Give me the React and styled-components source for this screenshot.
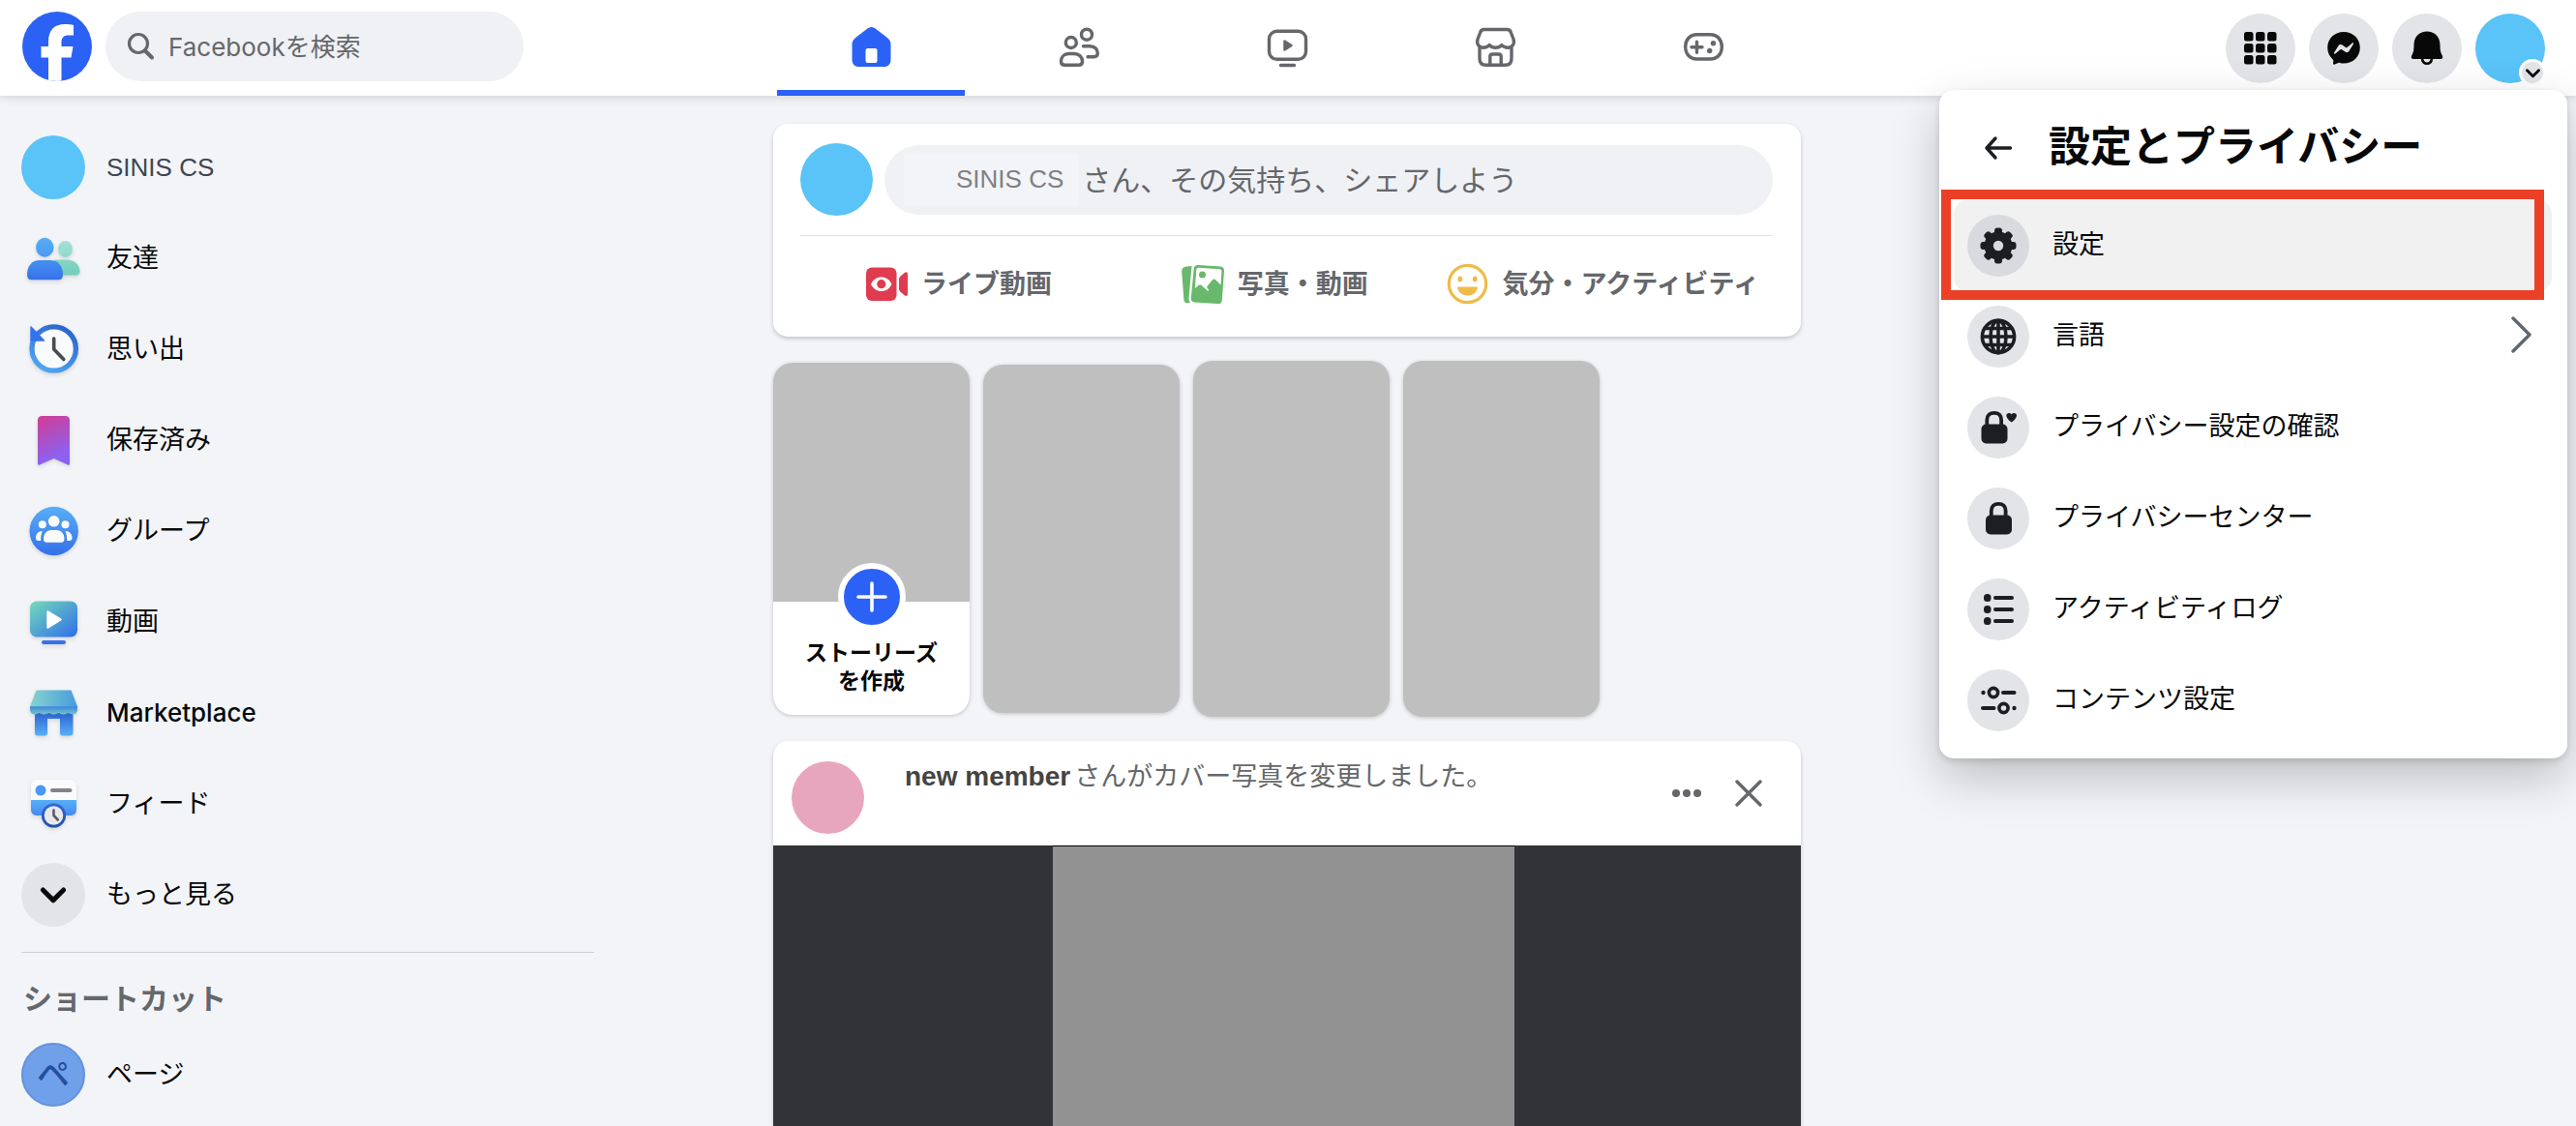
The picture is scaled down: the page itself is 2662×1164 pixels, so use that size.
import React, { useState } from 'react';
import styled, { createGlobalStyle } from 'styled-components';

const GlobalStyle = createGlobalStyle`
  * {
    box-sizing: border-box;
  }
  body {
    margin: 0;
    background: #f2f4f8;
    color: #080809;
    font-family: Inter, 'Noto Sans CJK JP', sans-serif;
    font-size: 27px;
    line-height: 36px;
  }
  button,
  input {
    font: inherit;
    color: inherit;
    border: none;
    padding: 0;
    background: none;
  }
  button {
    cursor: pointer;
  }
  a {
    color: inherit;
    text-decoration: none;
  }
  svg {
    display: block;
    flex: none;
  }
`;

const Page = styled.div`
  display: flex;
  flex-direction: column;
  height: 100vh;
  overflow: hidden;
`;

const TopBar = styled.header`
  position: relative;
  z-index: 1;
  display: grid;
  grid-template-columns: 1fr auto 1fr;
  height: 99px;
  flex: none;
  padding-right: 2px;
  background: #fff;
  box-shadow: 0 1px 10px rgba(0, 0, 0, 0.16);
`;

const TopLeft = styled.div`
  display: flex;
  align-items: center;
  gap: 14px;
  padding: 0 23px 3px;
`;

const SearchBox = styled.label`
  display: flex;
  align-items: center;
  gap: 14px;
  width: 432px;
  height: 72px;
  padding: 0 22px;
  border-radius: 36px;
  background: #f0f1f5;
  color: #65676b;
`;

const SearchInput = styled.input`
  flex: 1;
  min-width: 0;
  height: 48px;
  font-size: 26px;
  outline: none;
  &::placeholder {
    color: #65676b;
    opacity: 1;
  }
`;

const Tabs = styled.nav`
  display: flex;
  gap: 21px;
`;

const Tab = styled.a`
  display: flex;
  justify-content: center;
  align-items: center;
  width: 194px;
  border: solid transparent;
  border-width: 6px 0;
  border-bottom-color: ${(props) => (props.$active ? '#2b62f5' : 'transparent')};
  color: ${(props) => (props.$active ? '#2b62f5' : '#65676b')};
`;

const TopRight = styled.div`
  display: flex;
  justify-content: flex-end;
  align-items: center;
  gap: 14px;
  padding: 1px 30px 0;
`;

const RoundButton = styled.button`
  position: relative;
  width: 72px;
  height: 72px;
  border-radius: 50%;
  background: ${(props) => props.$color || '#e3e4e8'};
`;

const Badge = styled.span`
  position: absolute;
  right: -1px;
  bottom: -3px;
  display: flex;
  justify-content: center;
  align-items: center;
  width: 28px;
  height: 28px;
  border: 3px solid #fff;
  border-radius: 50%;
  background: #e3e4e8;
`;

const Content = styled.div`
  display: grid;
  grid-template-columns: 1fr minmax(0, 1062px) 1fr;
  flex: 1;
  min-height: 0;
  padding-right: 2px;
`;

const Sidebar = styled.aside`
  width: 636px;
  padding: 27px 22px 0;
`;

const List = styled.ul`
  margin: 0;
  padding: 0;
  list-style: none;
`;

const SideLink = styled.a`
  display: flex;
  align-items: center;
  gap: 22px;
  height: 94px;
  font-size: ${(props) => (props.$latin ? 26 : 27)}px;
  font-weight: ${(props) => (props.$latin ? 500 : 400)};
`;

const Avatar = styled.span`
  display: flex;
  justify-content: center;
  align-items: center;
  flex: none;
  width: ${(props) => props.$size}px;
  height: ${(props) => props.$size}px;
  border-radius: 50%;
  background: ${(props) => props.$color || '#5ac3f7'};
`;

const PageAvatar = styled(Avatar)`
  border: 2px solid #6492dc;
  color: #234f9f;
  font-size: 34px;
  font-weight: 500;
`;

const UserName = styled.span`
  font-family: 'Liberation Sans', sans-serif;
  font-size: 26px;
  color: #3e4650;
`;

const Divider = styled.hr`
  height: 1px;
  margin: ${(props) => props.$margin || '0'};
  border: none;
  background: ${(props) => props.$color || '#cdd0d5'};
`;

const SideHeading = styled.h2`
  margin: 15px 0 0;
  padding-left: 2px;
  font-size: 30px;
  line-height: 64px;
  font-weight: 600;
  color: #65676b;
`;

const Feed = styled.main`
  display: flex;
  flex-direction: column;
  gap: 25px;
  min-height: 0;
  padding-top: 29px;
`;

const Card = styled.section`
  border-radius: 15px;
  background: #fff;
  box-shadow: 0 2px 4px rgba(0, 0, 0, 0.2);
`;

const Composer = styled(Card)`
  padding: 20px 29px 18px 28px;
`;

const ComposerTop = styled.div`
  display: flex;
  align-items: center;
  gap: 12px;
`;

const ComposerButton = styled.button`
  display: flex;
  align-items: center;
  gap: 3px;
  flex: 1;
  height: 72px;
  padding-left: 20px;
  border-radius: 36px;
  background: #f0f1f5;
  font-size: 30px;
  color: #65676b;
`;

const NameChip = styled(UserName)`
  padding: 0 16px 0 54px;
  line-height: 53px;
  background: #f2f4f8;
  color: #808080;
`;

const ComposerActions = styled.div`
  display: flex;
  margin-top: 14px;
`;

const ComposerAction = styled.button`
  display: flex;
  justify-content: center;
  align-items: center;
  gap: 14px;
  flex: 1 1 0;
  height: 72px;
  padding: 0 14px;
  font-weight: 600;
  white-space: nowrap;
  color: #65676b;
`;

const Stories = styled.div`
  display: flex;
  align-items: center;
  gap: 14px;
`;

const Story = styled.article`
  display: flex;
  flex-direction: column;
  width: 203px;
  height: ${(props) => props.$height}px;
  border-radius: 20px;
  overflow: hidden;
  background: #bfbfbf;
  box-shadow: 0 1px 4px rgba(0, 0, 0, 0.2);
`;

const StoryFooter = styled.div`
  position: relative;
  height: 117px;
  margin-top: auto;
  padding-top: 39px;
  background: #fff;
  font-size: 23px;
  line-height: 29px;
  font-weight: 600;
  text-align: center;
`;

const AddStory = styled.button`
  position: absolute;
  top: -40px;
  left: 50%;
  display: flex;
  justify-content: center;
  align-items: center;
  width: 70px;
  height: 70px;
  margin-left: -35px;
  border: 6px solid #fff;
  border-radius: 50%;
  background: #2b62f5;
`;

const Post = styled(Card)`
  display: flex;
  flex-direction: column;
  flex: 1;
  min-height: 0;
  border-radius: 15px 15px 0 0;
`;

const PostHeader = styled.div`
  display: flex;
  height: 108px;
  padding: 21px 22px 0 19px;
`;

const PostText = styled.p`
  flex: 1;
  margin: 0 0 0 42px;
  line-height: 32px;
  color: #65676b;
  strong {
    margin-right: 4px;
    font-family: 'Liberation Sans', sans-serif;
    font-size: 28px;
    color: #444;
  }
`;

const PostButton = styled.button`
  display: flex;
  justify-content: center;
  align-items: center;
  width: 64px;
  height: 66px;
`;

const PostMedia = styled.div`
  display: grid;
  grid-template-columns: 289fr 477fr 296fr;
  flex: 1;
  background: #323337;
`;

const Photo = styled.div`
  grid-column: 2;
  border-top: 1px solid #000;
  background: #929292;
`;

const Menu = styled.div`
  position: absolute;
  top: 93px;
  right: 9px;
  z-index: 2;
  width: 649px;
  padding: 0 16px 13px 15px;
  border-radius: 15px;
  background: #fff;
  box-shadow: 0 20px 50px rgba(0, 0, 0, 0.22), 0 3px 7px rgba(0, 0, 0, 0.12);
`;

const MenuHeader = styled.div`
  display: flex;
  align-items: center;
  gap: 20px;
  height: 114px;
  padding: 6px 14px 0;
  h1 {
    margin: 0;
    padding-bottom: 4px;
    font-size: 43px;
    line-height: 60px;
    font-weight: 700;
  }
`;

const MenuItem = styled.button`
  position: relative;
  display: flex;
  align-items: center;
  gap: 24px;
  width: 100%;
  height: 94px;
  padding: 0 20px 0 14px;
  border-radius: 14px;
  background: ${(props) => (props.$active ? '#f1f1f1' : 'transparent')};
  text-align: left;
`;

const MenuLabel = styled.span`
  flex: 1;
  padding-bottom: 2px;
`;

const Highlight = styled.span`
  position: absolute;
  top: -11px;
  right: 8px;
  bottom: -9px;
  left: -13px;
  border: 10px solid #eb4026;
  pointer-events: none;
`;

const Logo = () => (
  <svg width="72" height="72" viewBox="0 0 72 72">
    <defs>
      <clipPath id="logoClip">
        <circle cx="36" cy="36" r="36" />
      </clipPath>
    </defs>
    <g clipPath="url(#logoClip)">
      <rect width="72" height="72" fill="#2b62f5" />
      <path
        d="M27 72V47.5H19.500V36H27V31.500C27 19 33 13 44 13C47.500 13 51 13.400 53 14V24.500H48C42.500 24.500 40.500 27 40.500 32V36H52.500L50.500 47.500H40.500V72Z"
        fill="#fff"
      />
    </g>
  </svg>
);

const SearchIcon = () => (
  <svg width="29" height="30" viewBox="0 0 29 30" fill="none" stroke="#65676b" strokeLinecap="round">
    <circle cx="12" cy="12" r="9.5" strokeWidth="3.2" />
    <path d="M19 19.5L26 26.5" strokeWidth="4" />
  </svg>
);

const TabSvg = ({ children }) => (
  <svg
    width="49"
    height="49"
    viewBox="0 0 49 49"
    fill="none"
    stroke="currentColor"
    strokeWidth="3.4"
    strokeLinecap="round"
    strokeLinejoin="round">
    {children}
  </svg>
);

const HomeIcon = () => (
  <TabSvg>
    <path
      d="M24.5 3C26.5 3 28 4 29.5 5.200L40 13.200C43.500 16 44.500 18 44.500 21V36C44.500 41.500 42 44 37 44H12C7 44 4.500 41.500 4.500 36V21C4.500 18 5.500 16 9 13.200L19.500 5.200C21 4 22.500 3 24.500 3Z"
      fill="currentColor"
      stroke="none"
    />
    <rect x="18.5" y="25" width="12" height="15" rx="2" fill="#fff" stroke="none" />
  </TabSvg>
);

const PeopleIcon = () => (
  <TabSvg>
    <circle cx="15.8" cy="19" r="5.5" />
    <circle cx="32" cy="10.7" r="5.5" />
    <path d="M13.5 30.5H19C24 30.5 27.5 34 27.5 38.5C27.5 41 26 42.3 23.5 42.3H9.5C7 42.3 5.500 41 5.500 38.500C5.500 34 8.500 30.500 13.500 30.500Z" />
    <path d="M28.5 22.7H35.5C40 22.7 43.3 26 43.3 30C43.3 32.3 41.8 33.7 39.5 33.7H33" />
  </TabSvg>
);

const VideoIcon = () => (
  <TabSvg>
    <rect x="5.5" y="7.3" width="38" height="29" rx="8" />
    <path d="M17.5 42.5H31.5" />
    <path d="M21.5 17.5V26.5L28.5 22Z" fill="currentColor" strokeWidth="2.5" />
  </TabSvg>
);

const StoreIcon = () => (
  <TabSvg>
    <path d="M12.5 5.5H36.5C38.5 5.5 39.7 6.5 40.3 8.5L43 15.5C44.5 20.5 41.5 24.3 37.5 24.3C34.5 24.3 32 23 30.8 21.5C29.5 23.3 27.3 24.3 24.5 24.3C21.7 24.3 19.5 23.3 18.2 21.5C17 23 14.5 24.3 11.5 24.3C7.5 24.3 4.5 20.5 6 15.5L8.7 8.5C9.3 6.5 10.5 5.5 12.5 5.5Z" />
    <path d="M8 25V35.5C8 40 10.5 42.3 14.5 42.3H34.5C38.5 42.3 41 40 41 35.5V25" />
    <path d="M18.8 42V33.5C18.8 32 20 31 21.5 31H27.5C29 31 30.2 32 30.2 33.5V42" />
  </TabSvg>
);

const GameIcon = () => (
  <TabSvg>
    <path d="M17.5 10.7H31.5C38.5 10.7 43.3 16 43.3 23.3C43.3 31 38.5 36 31.5 36H17.5C10.5 36 5.7 31 5.7 23.3C5.7 16 10.5 10.7 17.5 10.7Z" />
    <path d="M17.5 18.2V29.2M12 23.7H23" />
    <circle cx="34.5" cy="19.7" r="2.7" fill="currentColor" stroke="none" />
    <circle cx="30.7" cy="27.5" r="2.7" fill="currentColor" stroke="none" />
  </TabSvg>
);

const GridIcon = () => (
  <svg width="72" height="72" viewBox="0 0 72 72" fill="#080809">
    {[19, 31, 43].map((y) =>
      [19, 31, 43].map((x) => (
        <rect key={`${x}-${y}`} x={x} y={y} width="9.5" height="9.5" rx="2.5" />
      ))
    )}
  </svg>
);

const MessengerIcon = () => (
  <svg width="72" height="72" viewBox="0 0 72 72">
    <path
      d="M36 19C26.5 19 19.2 25.8 19.2 35.3C19.2 40.2 21.2 44.2 24.5 47.2C25 47.7 25.3 48.3 25.3 49L25 51.5C25 52.5 25.8 53 26.7 52.6L30.5 51C31 50.8 31.5 50.8 32 51C33.3 51.4 34.6 51.6 36 51.6C45.5 51.6 52.8 44.8 52.8 35.3C52.8 25.8 45.5 19 36 19Z"
      fill="#080809"
    />
    <path
      d="M26 40.5L30.5 33.3C31.5 31.8 33.2 31.5 34.6 32.5L38 35C38.5 35.3 39 35.3 39.5 35L44.8 30.5C45.6 30 46.5 30.8 46 31.6L41.5 38.8C40.5 40.3 38.8 40.6 37.4 39.6L34 37.2C33.5 36.9 33 36.9 32.5 37.2L27.2 41.5C26.4 42.1 25.5 41.3 26 40.5Z"
      fill="#e3e4e8"
    />
  </svg>
);

const BellIcon = () => (
  <svg width="72" height="72" viewBox="0 0 72 72">
    <path
      d="M36 18.5C28.5 18.5 23 23.5 22.6 31L22.3 37C22.2 38.5 21.8 40 21.2 41.3L20 44C19.3 45.7 20.2 47 22 47H50C51.8 47 52.7 45.7 52 44L50.8 41.3C50.2 40 49.8 38.5 49.7 37L49.4 31C49 23.5 43.5 18.5 36 18.5Z"
      fill="#080809"
    />
    <path d="M31 47C31.5 50 33.3 51.7 36 51.7C38.7 51.7 40.5 50 41 47" fill="none" stroke="#080809" strokeWidth="2.6" />
  </svg>
);

const Chevron = ({ size, width }) => (
  <svg width={size} height={size} viewBox="0 0 24 24" fill="none" stroke="#080809" strokeWidth={width} strokeLinecap="round" strokeLinejoin="round">
    <path d="M3.5 8L12 16.5L20.5 8" />
  </svg>
);

const SideSvg = styled.svg`
  width: 66px;
  height: 66px;
  filter: drop-shadow(0 2px 2px rgba(0, 0, 0, 0.12));
`;

const Gradient = ({ id, from, to, diagonal }) => (
  <linearGradient id={id} x1="0" y1="0" x2={diagonal ? '1' : '0'} y2="1">
    <stop offset="0" stopColor={from} />
    <stop offset="1" stopColor={to} />
  </linearGradient>
);

const FriendsColor = () => (
  <SideSvg viewBox="0 0 66 66">
    <defs>
      <Gradient id="frA" from="#58aef8" to="#4b98f2" />
      <Gradient id="frB" from="#4690f2" to="#3671e9" />
      <Gradient id="frC" from="#a3e0d8" to="#8fd9cc" />
      <Gradient id="frD" from="#87d5c6" to="#72cdb9" />
    </defs>
    <ellipse cx="45.5" cy="23.5" rx="7.5" ry="8.5" fill="url(#frC)" />
    <path d="M34 34.5H47C55 34.5 60.5 40 60.5 46.5C60.5 49 59 50.5 56.5 50.5H34Z" fill="url(#frD)" />
    <ellipse cx="24.3" cy="21.7" rx="9.2" ry="10" fill="url(#frA)" />
    <path d="M19 35H30C38 35 43 41 43 50C43 53.5 41.5 55.2 38.5 55.2H10.5C7.5 55.2 6 53.5 6 50C6 41 11 35 19 35Z" fill="url(#frB)" />
  </SideSvg>
);

const MemoriesColor = () => (
  <SideSvg viewBox="0 0 66 66">
    <defs>
      <linearGradient id="meA" x1="0.7" y1="0" x2="0.2" y2="1">
        <stop offset="0" stopColor="#2c66cf" />
        <stop offset="1" stopColor="#51a7f3" />
      </linearGradient>
    </defs>
    <circle cx="33.7" cy="32.5" r="22.7" fill="#f9fafb" stroke="url(#meA)" strokeWidth="5.3" />
    <path d="M10 10V24H23.5Z" fill="#3474ea" stroke="#3474ea" strokeWidth="1.5" strokeLinejoin="round" />
    <path d="M33.7 22V33L43.8 43.5" fill="none" stroke="#4a4b4f" strokeWidth="3.6" strokeLinecap="round" strokeLinejoin="round" />
  </SideSvg>
);

const SavedColor = () => (
  <SideSvg viewBox="0 0 66 66">
    <defs>
      <linearGradient id="saA" x1="0.3" y1="0" x2="0.55" y2="0.85">
        <stop offset="0" stopColor="#cd3f9b" />
        <stop offset="1" stopColor="#8b62f0" />
      </linearGradient>
    </defs>
    <path d="M21.5 8H45.5C48.5 8 50 9.5 50 12.5V57C50 58.8 49 59.3 47.5 58.3L33.7 52L19.5 58.3C18 59.3 17 58.8 17 57V12.5C17 9.5 18.5 8 21.5 8Z" fill="url(#saA)" />
  </SideSvg>
);

const GroupsColor = () => (
  <SideSvg viewBox="0 0 66 66">
    <defs>
      <Gradient id="grA" from="#58aef8" to="#3470e9" />
    </defs>
    <circle cx="33.7" cy="33" r="25.2" fill="url(#grA)" />
    <g fill="#f9fafc">
      <circle cx="33.7" cy="22.8" r="5.8" />
      <circle cx="21.8" cy="26.2" r="4" />
      <circle cx="45.5" cy="26.2" r="4" />
      <path d="M31 32H36.5C41.5 32 44.5 36 44.5 41C44.5 43.5 43.3 44.7 41 44.7H26.5C24 44.7 23 43.5 23 41C23 36 26 32 31 32Z" />
      <path d="M21.8 33C17.5 33 15 36 15 40C15 42 16 43 18 43H20.2C20 39 20.5 36 21.8 33Z" />
      <path d="M45.5 33C50 33 52.5 36 52.5 40C52.5 42 51.5 43 49.5 43H47.2C47.3 39 46.8 36 45.5 33Z" />
    </g>
  </SideSvg>
);

const VideoColor = () => (
  <SideSvg viewBox="0 0 66 66">
    <defs>
      <Gradient id="viA" from="#74dcb8" to="#2f6cec" diagonal />
    </defs>
    <rect x="9" y="11.5" width="49" height="37" rx="7" fill="url(#viA)" />
    <rect x="21" y="52" width="25" height="4" rx="2" fill="#3671e9" />
    <path d="M27.5 22.5V38.5L40.5 30.5Z" fill="#fff" stroke="#fff" strokeWidth="2.5" strokeLinejoin="round" />
  </SideSvg>
);

const MarketColor = () => (
  <SideSvg viewBox="0 0 66 66">
    <defs>
      <linearGradient id="maA">
        <stop offset="0" stopColor="#86d4cc" />
        <stop offset="1" stopColor="#479bdf" />
      </linearGradient>
      <Gradient id="maB" from="#3c82e0" to="#72c9c6" />
      <Gradient id="maC" from="#2f62cf" to="#57b0f8" />
    </defs>
    <path d="M14 33H53.5V53.5C53.5 55.5 52.5 56.5 50.5 56.5H42.5C41 56.5 40 55.5 40 54V39H27V54C27 55.5 26 56.5 24.5 56.5H17C15 56.5 14 55.5 14 53.5Z" fill="url(#maC)" />
    <path d="M9 26H58V29.5C58 32.5 56.5 34.5 53.5 34.5C51 34.5 49.5 33.8 48.5 32.5C45.5 35.2 41.5 35.2 38.5 32.5C35.5 35.2 31.5 35.2 28.5 32.5C25.5 35.2 21.5 35.2 18.5 32.5C17.5 33.8 16 34.5 13.5 34.5C10.5 34.5 9 32.5 9 29.5Z" fill="url(#maB)" />
    <path d="M15.5 9.5H51.5L58 26.2H9Z" fill="url(#maA)" />
  </SideSvg>
);

const FeedColor = () => (
  <SideSvg viewBox="0 0 66 66">
    <defs>
      <Gradient id="feA" from="#58b0f8" to="#4489f0" />
      <Gradient id="feB" from="#3168d2" to="#2450a8" />
    </defs>
    <path d="M17 8H50C54.5 8 57 10.5 57 15V29H10V15C10 10.5 12.5 8 17 8Z" fill="#fbfbfc" />
    <path d="M10 29H57V38.5C57 43 54.5 45 50 45H17C12.5 45 10 43 10 38.5Z" fill="url(#feA)" />
    <circle cx="20" cy="19" r="5.5" fill="#4a98f5" />
    <path d="M32 19H50.5" stroke="#838489" strokeWidth="4" strokeLinecap="round" />
    <circle cx="33.5" cy="45" r="11.2" fill="#e7e8ec" stroke="url(#feB)" strokeWidth="2.8" />
    <path d="M33.5 39.5V45L37.8 49.5" fill="none" stroke="#5b5c60" strokeWidth="2.6" strokeLinecap="round" />
  </SideSvg>
);

const LiveIcon = () => (
  <svg width="44" height="44" viewBox="0 0 44 44" fill="#df3d4f">
    <rect x="1" y="4.5" width="31.5" height="34.5" rx="6" />
    <path d="M35 17C35 15.5 35.5 14.5 36.5 13.5L41 9.8C42.5 8.8 44 9.3 44 11.3V32C44 34 42.5 34.5 41 33.5L36.5 29.7C35.5 28.7 35 27.7 35 26.2Z" />
    <path d="M6 21.7C8.5 17 12 14.5 16.8 14.5C21.5 14.5 25 17 27.5 21.7C25 26.5 21.5 29 16.8 29C12 29 8.5 26.5 6 21.7Z" fill="#fff" />
    <circle cx="16.8" cy="21.7" r="4.6" />
  </svg>
);

const PhotoIcon = () => (
  <svg width="44" height="44" viewBox="0 0 44 44" fill="#68b96c">
    <path d="M5 3.5L10.5 3L7.5 36.5C7.3 38.3 8 40 9.3 41L6.5 41.3C4 41.5 2.7 40.3 2.4 38L0.2 8.5C0 5.5 2 3.8 5 3.5Z" />
    <path d="M17.5 2L40 3.6C42.7 3.8 44.2 5.5 44 8.2L41.8 38.2C41.6 41 40 42.3 37.2 42.1L13.5 40.4C10.8 40.2 9.6 38.6 9.8 36L12.7 6C13 3.3 14.7 1.8 17.5 2Z" />
    <path d="M17.8 4.7L39.3 6.2C40.9 6.3 41.5 7.2 41.4 8.7L40.5 22.5L35.5 17.5C34.3 16.3 33 16.3 31.8 17.5L26 24.5L28 27.5C28.4 28.3 27.4 29 26.7 28.4L20.5 22.8C19.5 22 18.7 22 17.8 22.7L13.8 26L15.3 7C15.4 5.4 16.2 4.6 17.8 4.7Z" fill="#fff" />
    <circle cx="21.5" cy="12" r="3.5" />
  </svg>
);

const FeelingIcon = () => (
  <svg width="44" height="44" viewBox="0 0 44 44" fill="#efbb48">
    <circle cx="21.5" cy="21.5" r="19.2" fill="none" stroke="#efbb48" strokeWidth="3.2" />
    <ellipse cx="13.8" cy="16.5" rx="2.4" ry="3" />
    <ellipse cx="29.2" cy="16.5" rx="2.4" ry="3" />
    <path d="M12.5 24.5H30.5C31.5 24.5 32 25 31.8 26C30.8 30.5 26.5 33.5 21.5 33.5C16.5 33.5 12.2 30.5 11.2 26C11 25 11.5 24.5 12.5 24.5Z" />
  </svg>
);

const MenuSvg = ({ children }) => (
  <svg width="64" height="64" viewBox="0 0 64 64" fill="#1c1e21">
    {children}
  </svg>
);

const GearIcon = () => (
  <MenuSvg>
    {[0, 45, 90, 135].map((angle) => (
      <rect key={angle} x="28" y="13.5" width="8" height="37" rx="3" transform={`rotate(${angle} 32 32)`} />
    ))}
    <circle cx="32" cy="32" r="14.5" />
    <circle cx="32" cy="32" r="5.2" fill="#d8dadf" />
  </MenuSvg>
);

const GlobeIcon = () => (
  <MenuSvg>
    <g fill="none" stroke="#1c1e21" strokeWidth="3.6">
      <circle cx="32" cy="32" r="16.6" />
      <ellipse cx="32" cy="32" rx="8" ry="16.6" />
      <path d="M32 15V49M15 32H49M17.5 23.5H46.5M17.5 40.5H46.5" />
    </g>
  </MenuSvg>
);

const LockShape = () => (
  <>
    <rect x="19" y="28.5" width="27" height="20" rx="5" />
    <path d="M24.8 30V24C24.8 19.5 27.8 16.8 32.3 16.8C36.8 16.8 39.6 19.5 39.6 24V30" fill="none" stroke="#1c1e21" strokeWidth="3.8" />
  </>
);

const LockIcon = () => (
  <MenuSvg>
    <LockShape />
  </MenuSvg>
);

const LockHeartIcon = () => (
  <MenuSvg>
    <g transform="translate(-4.5 0)">
      <LockShape />
    </g>
    <path d="M45.7 26.5C42 24 40.3 21.5 40.3 19.5C40.3 16.8 44 16 45.7 18.5C47.4 16 51 16.8 51 19.5C51 21.5 49.4 24 45.7 26.5Z" />
  </MenuSvg>
);

const ListIcon = () => (
  <MenuSvg>
    {[20, 32, 44].map((y) => (
      <g key={y}>
        <rect x="17" y={y - 4} width="7.5" height="8" rx="3.5" />
        <rect x="27" y={y - 2} width="21" height="4" rx="2" />
      </g>
    ))}
  </MenuSvg>
);

const SlidersIcon = () => (
  <MenuSvg>
    <circle cx="16.5" cy="24" r="2.2" />
    <rect x="35" y="22" width="15.5" height="4" rx="2" />
    <rect x="14" y="38" width="15.5" height="4" rx="2" />
    <circle cx="48.5" cy="40" r="2.2" />
    <g fill="none" stroke="#1c1e21" strokeWidth="3.6">
      <circle cx="27" cy="24" r="4.6" />
      <circle cx="37.5" cy="40" r="4.6" />
    </g>
  </MenuSvg>
);

const tabs = [
  { name: 'ホーム', icon: HomeIcon },
  { name: '友達', icon: PeopleIcon },
  { name: '動画', icon: VideoIcon },
  { name: 'Marketplace', icon: StoreIcon },
  { name: 'ゲーム', icon: GameIcon },
];

const sideLinks = [
  { name: '友達', icon: FriendsColor },
  { name: '思い出', icon: MemoriesColor },
  { name: '保存済み', icon: SavedColor },
  { name: 'グループ', icon: GroupsColor },
  { name: '動画', icon: VideoColor },
  { name: 'Marketplace', icon: MarketColor, latin: true },
  { name: 'フィード', icon: FeedColor },
];

const composerActions = [
  { name: 'ライブ動画', icon: LiveIcon },
  { name: '写真・動画', icon: PhotoIcon },
  { name: '気分・アクティビティ', icon: FeelingIcon },
];

const menuItems = [
  { name: '設定', icon: GearIcon },
  { name: '言語', icon: GlobeIcon, more: true },
  { name: 'プライバシー設定の確認', icon: LockHeartIcon },
  { name: 'プライバシーセンター', icon: LockIcon },
  { name: 'アクティビティログ', icon: ListIcon },
  { name: 'コンテンツ設定', icon: SlidersIcon },
];

const SettingsMenu = () => {
  const [active, setActive] = useState('設定');
  return (
    <Menu>
      <MenuHeader>
        <button type="button" aria-label="戻る">
          <svg width="64" height="64" viewBox="0 0 64 64" fill="none" stroke="#1c1e21" strokeWidth="3.4" strokeLinecap="round" strokeLinejoin="round">
            <path d="M44.5 32H20M29 22L20 32L29 42" />
          </svg>
        </button>
        <h1>設定とプライバシー</h1>
      </MenuHeader>
      {menuItems.map(({ name, icon: Icon, more }) => (
        <MenuItem key={name} type="button" $active={active === name} onClick={() => setActive(name)}>
          <Avatar $size={64} $color={active === name ? '#d8dadf' : '#e3e4e8'}>
            <Icon />
          </Avatar>
          <MenuLabel>{name}</MenuLabel>
          {more && (
            <svg width="22" height="42" viewBox="0 0 22 42" fill="none" stroke="#606770" strokeWidth="3.4" strokeLinecap="round" strokeLinejoin="round">
              <path d="M2 2L19 19L2 36" />
            </svg>
          )}
          {active === name && <Highlight />}
        </MenuItem>
      ))}
    </Menu>
  );
};

const App = () => {
  const [activeTab, setActiveTab] = useState('ホーム');
  const [query, setQuery] = useState('');

  return (
    <Page>
      <GlobalStyle />
      <TopBar>
        <TopLeft>
          <a href="#home" aria-label="Facebook">
            <Logo />
          </a>
          <SearchBox>
            <SearchIcon />
            <SearchInput
              type="text"
              aria-label="Facebookを検索"
              placeholder="Facebookを検索"
              value={query}
              onChange={(e) => setQuery(e.target.value)}
            />
          </SearchBox>
        </TopLeft>
        <Tabs>
          {tabs.map(({ name, icon: Icon }) => (
            <Tab key={name} href="#tab" aria-label={name} $active={activeTab === name} onClick={() => setActiveTab(name)}>
              <Icon />
            </Tab>
          ))}
        </Tabs>
        <TopRight>
          <RoundButton type="button" aria-label="メニュー">
            <GridIcon />
          </RoundButton>
          <RoundButton type="button" aria-label="Messenger">
            <MessengerIcon />
          </RoundButton>
          <RoundButton type="button" aria-label="お知らせ">
            <BellIcon />
          </RoundButton>
          <RoundButton type="button" aria-label="アカウント" $color="#5ac3f7">
            <Badge>
              <Chevron size={17} width={4} />
            </Badge>
          </RoundButton>
        </TopRight>
      </TopBar>

      <Content>
        <Sidebar>
          <List>
            <li>
              <SideLink href="#profile">
                <Avatar $size={66} />
                <UserName>SINIS CS</UserName>
              </SideLink>
            </li>
            {sideLinks.map(({ name, icon: Icon, latin }) => (
              <li key={name}>
                <SideLink href="#link" $latin={latin}>
                  <Icon />
                  {name}
                </SideLink>
              </li>
            ))}
            <li>
              <SideLink href="#more">
                <Avatar $size={66} $color="#e3e4e8">
                  <Chevron size={30} width={4} />
                </Avatar>
                もっと見る
              </SideLink>
            </li>
          </List>
          <Divider $margin="12px 0 0" />
          <SideHeading>ショートカット</SideHeading>
          <SideLink href="#page">
            <PageAvatar $size={66} $color="#71a0ea">
              ペ
            </PageAvatar>
            ページ
          </SideLink>
        </Sidebar>

        <Feed>
          <Composer>
            <ComposerTop>
              <Avatar $size={75} />
              <ComposerButton type="button">
                <NameChip>SINIS CS</NameChip>
                さん、その気持ち、シェアしよう
              </ComposerButton>
            </ComposerTop>
            <Divider $margin="20px 0 0" $color="#e0e2e6" />
            <ComposerActions>
              {composerActions.map(({ name, icon: Icon }) => (
                <ComposerAction key={name} type="button">
                  <Icon />
                  {name}
                </ComposerAction>
              ))}
            </ComposerActions>
          </Composer>

          <Stories>
            <Story $height={364}>
              <StoryFooter>
                <AddStory type="button" aria-label="ストーリーズを作成">
                  <svg width="32" height="32" viewBox="0 0 32 32" stroke="#fff" strokeWidth="3.6" strokeLinecap="round">
                    <path d="M16 2V30M2 16H30" />
                  </svg>
                </AddStory>
                ストーリーズ
                <br />
                を作成
              </StoryFooter>
            </Story>
            <Story $height={360} />
            <Story $height={368} />
            <Story $height={368} />
          </Stories>

          <Post>
            <PostHeader>
              <Avatar $size={75} $color="#e8a6be" />
              <PostText>
                <strong>new member</strong>
                さんがカバー写真を変更しました。
              </PostText>
              <PostButton type="button" aria-label="その他">
                <svg width="32" height="10" viewBox="0 0 32 10" fill="#65676b">
                  <circle cx="5" cy="5" r="4" />
                  <circle cx="16" cy="5" r="4" />
                  <circle cx="27" cy="5" r="4" />
                </svg>
              </PostButton>
              <PostButton type="button" aria-label="閉じる">
                <svg width="28" height="28" viewBox="0 0 28 28" stroke="#65676b" strokeWidth="3.4" strokeLinecap="round">
                  <path d="M2 2L26 26M26 2L2 26" />
                </svg>
              </PostButton>
            </PostHeader>
            <PostMedia>
              <Photo />
            </PostMedia>
          </Post>
        </Feed>
      </Content>

      <SettingsMenu />
    </Page>
  );
};

export default App;
